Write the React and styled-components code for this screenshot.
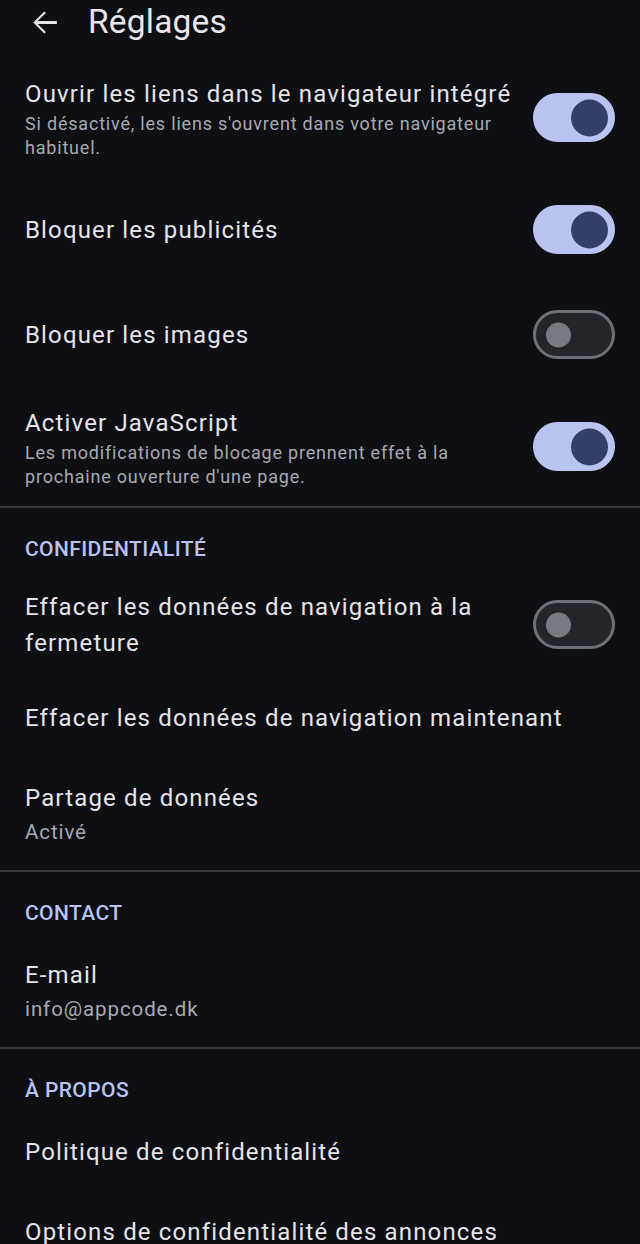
import React, { useState } from "react";
import styled, { createGlobalStyle } from "styled-components";

const GlobalStyle = createGlobalStyle`
  html, body {
    margin: 0;
    padding: 0;
    background: #0e0f13;
  }
  body {
    font-family: Roboto, "Noto Sans", "Liberation Sans", sans-serif;
    color: #e4e4ea;
  }
`;

const Page = styled.div`
  width: 640px;
  min-height: 1244px;
  background: #0e0f13;
  overflow: hidden;
`;

const Toolbar = styled.div`
  height: 44px;
  margin-bottom: 14px;
  display: flex;
  align-items: center;
  padding-left: 26px;
`;

const BackButton = styled.button`
  width: 37px;
  height: 37px;
  padding: 0;
  border: none;
  background: none;
  color: #e4e4ea;
  display: flex;
  align-items: center;
  justify-content: center;
  cursor: pointer;
`;

const Title = styled.h1`
  margin: 0 0 0 25px;
  font-size: 33.5px;
  font-weight: 400;
  line-height: 44px;
  letter-spacing: 0.2px;
  color: #e6e6ec;
`;

const Row = styled.div`
  box-sizing: border-box;
  display: flex;
  align-items: center;
  gap: 20px;
  padding: ${(p) => (p.$switch ? "17.5px" : "22px")} 25px;
  min-height: ${(p) => (p.$switch ? "105px" : "80px")};
  cursor: pointer;
`;

const TextCol = styled.div`
  flex: 1;
  min-width: 0;
`;

const ItemTitle = styled.div`
  font-size: 24px;
  line-height: 36px;
  letter-spacing: 1.15px;
  color: #e4e4ea;
`;

const ItemSummary = styled.div`
  font-size: ${(p) => (p.$big ? "20.5px" : "18px")};
  line-height: ${(p) => (p.$big ? "32px" : "24px")};
  letter-spacing: ${(p) => (p.$big ? "0.9px" : "0.8px")};
  color: #a7a9b1;
`;

const Track = styled.button`
  box-sizing: border-box;
  flex: none;
  position: relative;
  width: 82px;
  height: 49px;
  padding: 0;
  border-radius: 25px;
  border: 3px solid ${(p) => (p.$on ? "#b9c4f1" : "#6e7078")};
  background: ${(p) => (p.$on ? "#b9c4f1" : "#23252b")};
  cursor: pointer;
`;

const Thumb = styled.span`
  position: absolute;
  top: 50%;
  border-radius: 50%;
  transform: translateY(-50%);
  width: ${(p) => (p.$on ? "37px" : "25px")};
  height: ${(p) => (p.$on ? "37px" : "25px")};
  left: ${(p) => (p.$on ? "35px" : "10px")};
  background: ${(p) => (p.$on ? "#343f69" : "#797b83")};
`;

const Divider = styled.hr`
  margin: 0;
  border: none;
  height: 2px;
  background: #36383e;
`;

const SectionHeader = styled.div`
  padding: 28.5px 25px 10.5px;
  font-size: 21px;
  line-height: 24px;
  font-weight: 500;
  letter-spacing: 0.4px;
  color: #b9c3f2;
`;

const ArrowBack = () => (
  <svg width="37" height="37" viewBox="0 0 24 24" fill="currentColor">
    <path d="M20 11.1H7.6l5.3-5.3-1-1L4.7 12l7.2 7.2 1-1-5.3-5.3H20z" />
  </svg>
);

const Toggle = ({ on, onChange }) => (
  <Track $on={on} onClick={onChange} aria-pressed={on}>
    <Thumb $on={on} />
  </Track>
);

const SwitchRow = ({ title, summary, on, onToggle }) => (
  <Row $switch>
    <TextCol>
      <ItemTitle>{title}</ItemTitle>
      {summary && <ItemSummary>{summary}</ItemSummary>}
    </TextCol>
    <Toggle on={on} onChange={onToggle} />
  </Row>
);

const PlainRow = ({ title, summary }) => (
  <Row>
    <TextCol>
      <ItemTitle>{title}</ItemTitle>
      {summary && <ItemSummary $big>{summary}</ItemSummary>}
    </TextCol>
  </Row>
);

export default function App() {
  const [prefs, setPrefs] = useState({
    inApp: true,
    ads: true,
    images: false,
    js: true,
    clearOnExit: false,
  });
  const flip = (key) => () => setPrefs((p) => ({ ...p, [key]: !p[key] }));

  return (
    <Page>
      <GlobalStyle />
      <Toolbar>
        <BackButton aria-label="Retour">
          <ArrowBack />
        </BackButton>
        <Title>Réglages</Title>
      </Toolbar>

      <SwitchRow
        title="Ouvrir les liens dans le navigateur intégré"
        summary="Si désactivé, les liens s'ouvrent dans votre navigateur habituel."
        on={prefs.inApp}
        onToggle={flip("inApp")}
      />
      <SwitchRow title="Bloquer les publicités" on={prefs.ads} onToggle={flip("ads")} />
      <SwitchRow title="Bloquer les images" on={prefs.images} onToggle={flip("images")} />
      <SwitchRow
        title="Activer JavaScript"
        summary="Les modifications de blocage prennent effet à la prochaine ouverture d'une page."
        on={prefs.js}
        onToggle={flip("js")}
      />
      <Divider />

      <SectionHeader>CONFIDENTIALITÉ</SectionHeader>
      <SwitchRow
        title="Effacer les données de navigation à la fermeture"
        on={prefs.clearOnExit}
        onToggle={flip("clearOnExit")}
      />
      <PlainRow title="Effacer les données de navigation maintenant" />
      <PlainRow title="Partage de données" summary="Activé" />
      <Divider />

      <SectionHeader>CONTACT</SectionHeader>
      <PlainRow title="E-mail" summary="info@appcode.dk" />
      <Divider />

      <SectionHeader>À PROPOS</SectionHeader>
      <PlainRow title="Politique de confidentialité" />
      <PlainRow title="Options de confidentialité des annonces" />
    </Page>
  );
}
